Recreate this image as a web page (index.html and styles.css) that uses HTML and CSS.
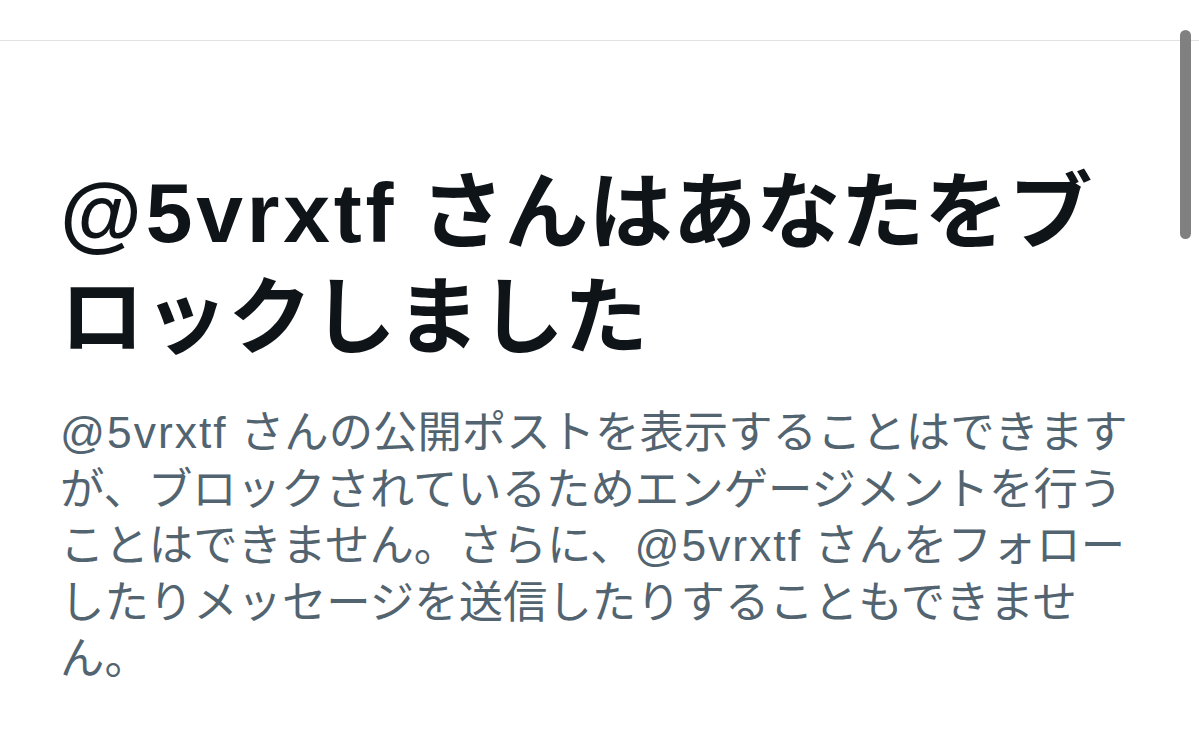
FILE: index.html
```html
<!DOCTYPE html>
<html lang="ja">
<head>
  <meta charset="utf-8">
  <title>ブロックされています</title>
  <link rel="stylesheet" href="styles.css">
</head>
<body>
  <div id="top-bar"></div>
  <div id="content">
    <h1 class="blocked-title"><span class="handle">@5vrxtf</span> さんはあなたをブロックしました</h1>
    <p class="blocked-text"><span class="handle">@5vrxtf</span> さんの公開ポストを表示することはできますが、ブロックされているためエンゲージメントを行うことはできません。さらに、<span class="handle">@5vrxtf</span> さんをフォローしたりメッセージを送信したりすることもできません。</p>
  </div>
  <div id="scroll-thumb"></div>
</body>
</html>
```

FILE: styles.css
```css
body {
  margin: 0;
  background-color: #fff;
  font-family: "Liberation Sans", "Noto Sans CJK JP", sans-serif;
  overflow: hidden;
}

#top-bar {
  height: 40px;
  border-bottom: 1px solid #e1e1e1;
}

#content {
  padding: 0 60px;
}

.blocked-title {
  margin: 120px 0 0 0;
  font-size: 84px;
  line-height: 105px;
  font-weight: 700;
  color: #0f1419;
  line-break: strict;
}

.blocked-text {
  margin: 34px 0 0 0;
  font-size: 44.4px;
  line-height: 56.5px;
  color: #536471;
  line-break: strict;
}

.handle {
  letter-spacing: 0.045em;
}

#scroll-thumb {
  position: absolute;
  top: 30px;
  left: 1180px;
  width: 11px;
  height: 209px;
  border-radius: 6px;
  background-color: #808080;
}
```
